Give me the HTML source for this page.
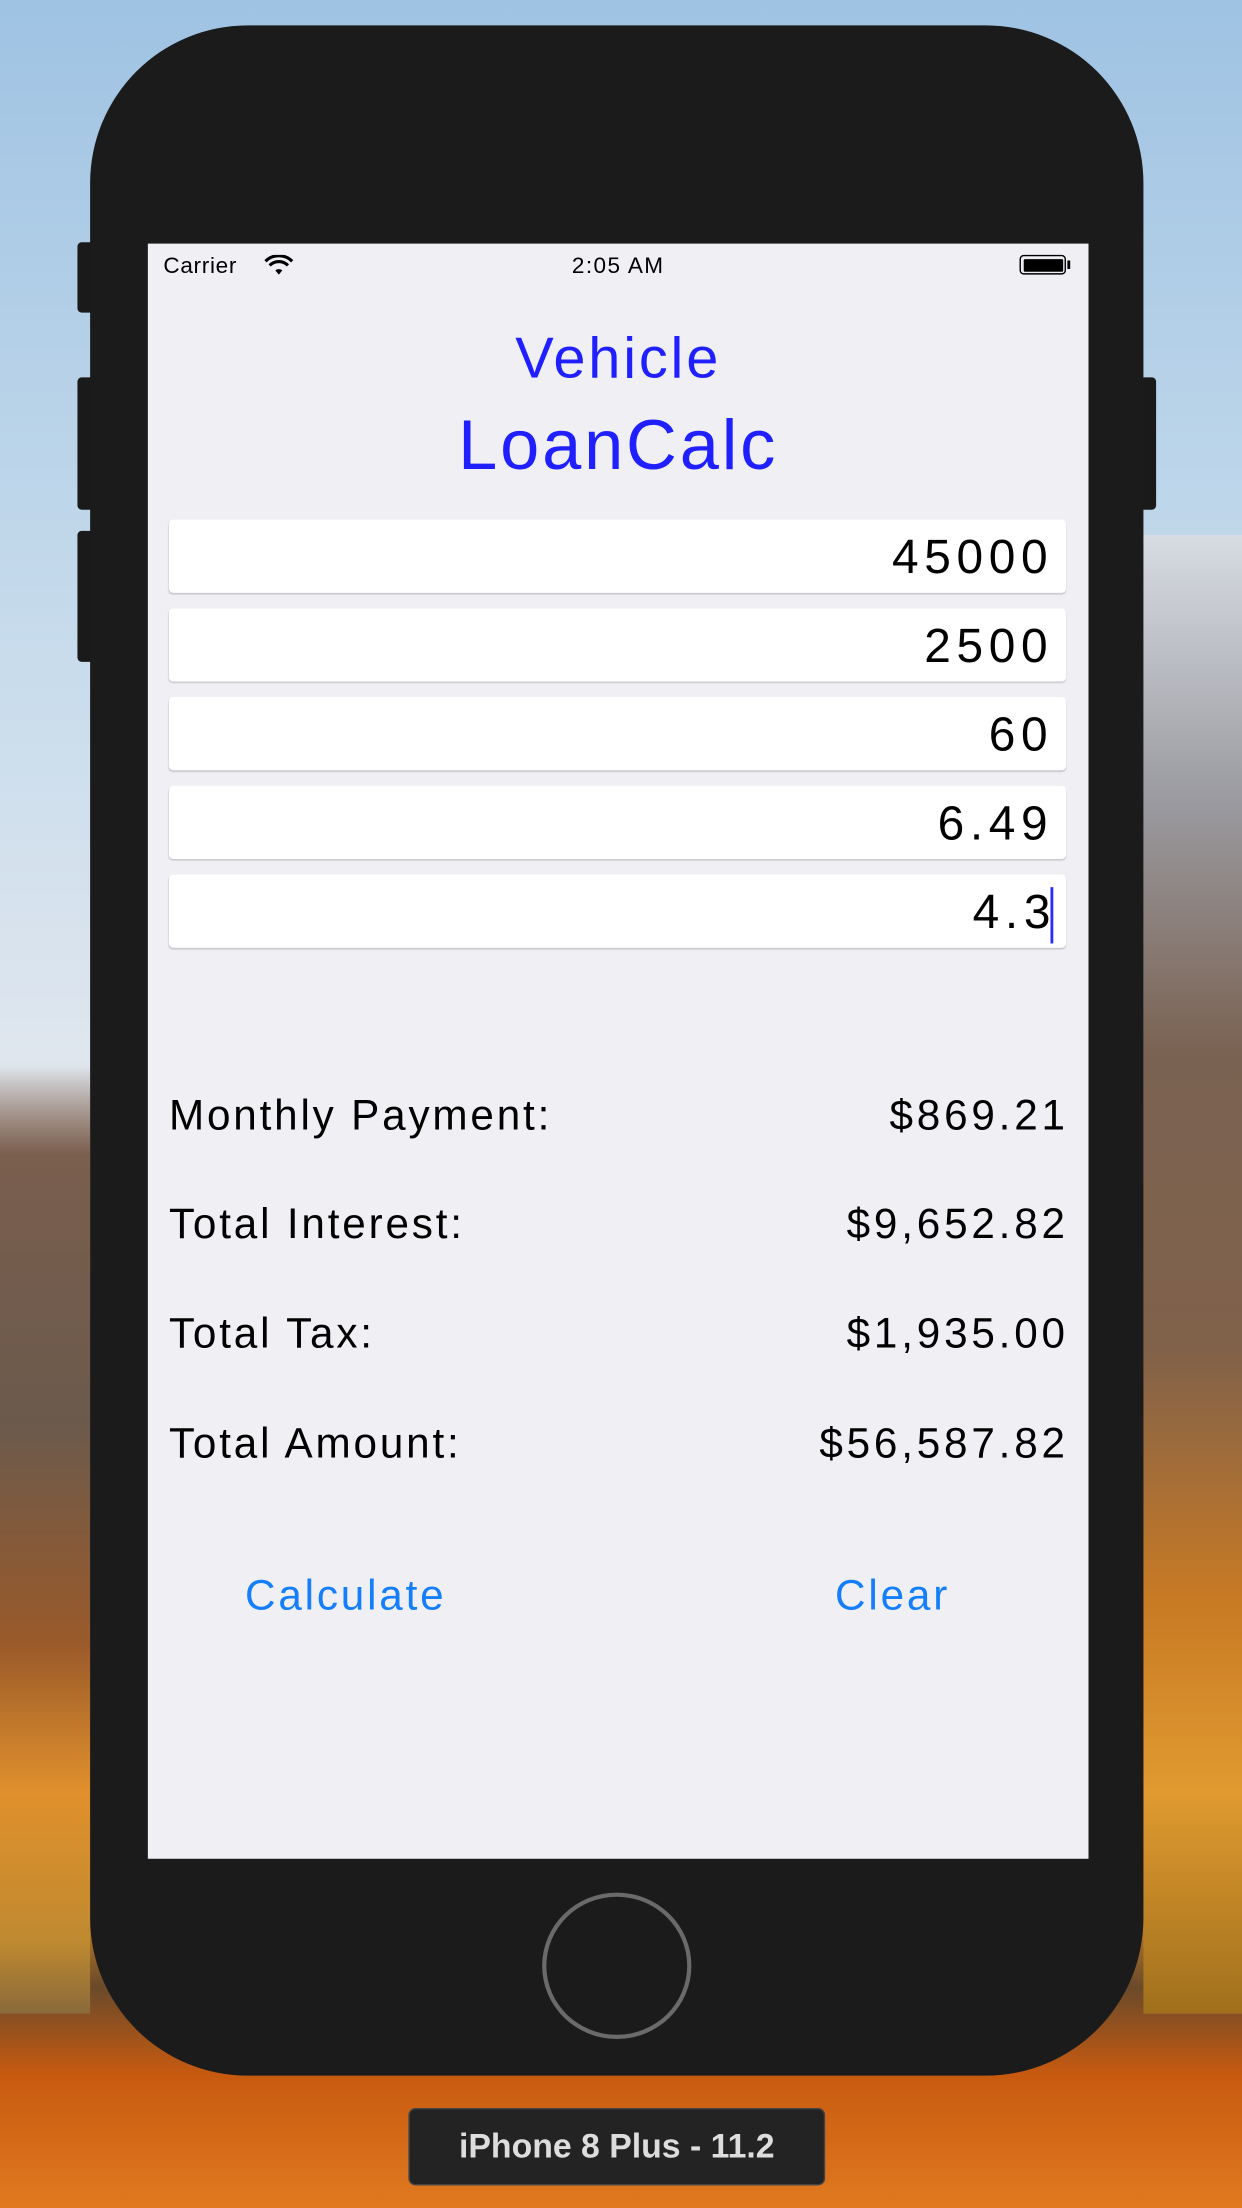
<!DOCTYPE html>
<html><head><meta charset="utf-8"><style>
html,body{margin:0;padding:0;width:1242px;height:2208px;overflow:hidden;}
#w{position:absolute;left:0;top:0;width:882px;height:1568px;transform:scale(1.408163);transform-origin:0 0;
background:linear-gradient(180deg,#9fc3e3 0%,#c8dcec 30%,#dfe6ee 48%,#b9a79b 55%,#7c6456 65%,#6e5a4c 72%,#b86a22 80%,#d88a24 86%,#6a4a2a 90%,#c85a10 94%,#e07a20 100%);
font-family:"Liberation Sans",sans-serif;}
.a{position:absolute;}
.f{position:absolute;left:15px;width:637px;height:52px;background:#fff;border-radius:3px;box-shadow:0 1px 1px #c8c8cc;font-size:34px;text-align:right;line-height:54px;box-sizing:border-box;padding-right:9px;color:#000;letter-spacing:4px;}
.l{position:absolute;left:15px;font-size:30px;color:#000;letter-spacing:2px;}
.r{position:absolute;right:14px;font-size:30px;color:#000;letter-spacing:2.7px;}
</style></head><body><div id="w">
<div class="a" style="left:0;top:380px;width:64px;height:1050px;background:linear-gradient(180deg,transparent 0%,transparent 36%,#7a5e4e 42%,#6b5a4c 60%,#9a5a2a 75%,#e0902c 85%,#c08a30 95%,#8a6a3a 100%);"></div>
<div class="a" style="left:812px;top:380px;width:70px;height:1050px;background:linear-gradient(180deg,#d7dce2 0%,#9a9aa0 18%,#7a6252 35%,#80614a 55%,#c87a24 72%,#e09a30 85%,#a0701c 100%);"></div>
<div class="a" style="left:55px;top:172px;width:12px;height:50px;background:#1a1a1a;border-radius:3px"></div>
<div class="a" style="left:55px;top:268px;width:12px;height:94px;background:#1a1a1a;border-radius:3px"></div>
<div class="a" style="left:55px;top:377px;width:12px;height:93px;background:#1a1a1a;border-radius:3px"></div>
<div class="a" style="left:809px;top:268px;width:12px;height:94px;background:#1a1a1a;border-radius:3px"></div>
<div class="a" style="left:64px;top:18px;width:748px;height:1456px;background:#1b1b1c;border-radius:112px;"></div>
<div class="a" style="left:385px;top:1344px;border:3px solid #6a6a6a;border-radius:50%;box-sizing:border-box;width:106px;height:104px"></div>
<div class="a" style="left:290px;top:1497px;width:296px;height:55px;background:#232323;border:1px solid #444;border-radius:5px;box-sizing:border-box;color:#ddd;font-weight:bold;font-size:24px;text-align:center;line-height:53px;">iPhone 8 Plus - 11.2</div>
<div class="a" style="left:105px;top:173px;width:668px;height:1147px;background:#efeff4;overflow:hidden;">
 <div class="a" style="left:11px;top:8px;font-size:16px;letter-spacing:0.5px">Carrier</div>
 <svg class="a" style="left:82px;top:8px" width="22" height="16" viewBox="0 0 22 16"><path d="M11 14l-2.5-3a4 4 0 0 1 5 0z" fill="#000"/><path d="M4.5 7.5a9 9 0 0 1 13 0M1.5 4.5a13.5 13.5 0 0 1 19 0" stroke="#000" stroke-width="2.2" fill="none"/></svg>
 <div class="a" style="left:0;width:668px;top:8px;font-size:16px;text-align:center;letter-spacing:1px">2:05 AM</div>
 <div class="a" style="left:619px;top:8px;width:33px;height:14px;border:1px solid #000;border-radius:3px;box-sizing:border-box;padding:1.5px"><div style="background:#000;height:100%;border-radius:1px"></div></div>
 <div class="a" style="left:653px;top:12px;width:2px;height:6px;background:#000"></div>
 <div class="a" style="left:0;width:668px;top:58px;font-size:41px;text-align:center;color:#1f1fff;letter-spacing:2px">Vehicle</div>
 <div class="a" style="left:0;width:668px;top:114px;font-size:50px;text-align:center;color:#1f1fff;letter-spacing:2px">LoanCalc</div>
 <div class="f" style="top:196px">45000</div>
 <div class="f" style="top:259px">2500</div>
 <div class="f" style="top:322px">60</div>
 <div class="f" style="top:385px">6.49</div>
 <div class="f" style="top:448px">4.3<span style="display:inline-block;width:2px;height:40px;background:#2b2bff;vertical-align:middle;margin-left:-4px"></span></div>
 <div class="l" style="top:603px">Monthly Payment:</div><div class="r" style="top:603px">$869.21</div>
 <div class="l" style="top:680px">Total Interest:</div><div class="r" style="top:680px">$9,652.82</div>
 <div class="l" style="top:758px">Total Tax:</div><div class="r" style="top:758px">$1,935.00</div>
 <div class="l" style="top:836px">Total Amount:</div><div class="r" style="top:836px">$56,587.82</div>
 <div class="a" style="left:69px;top:944px;font-size:30px;color:#147efb;letter-spacing:2px">Calculate</div>
 <div class="a" style="left:488px;top:944px;font-size:30px;color:#147efb;letter-spacing:2px">Clear</div>
</div>
</div></body></html>
